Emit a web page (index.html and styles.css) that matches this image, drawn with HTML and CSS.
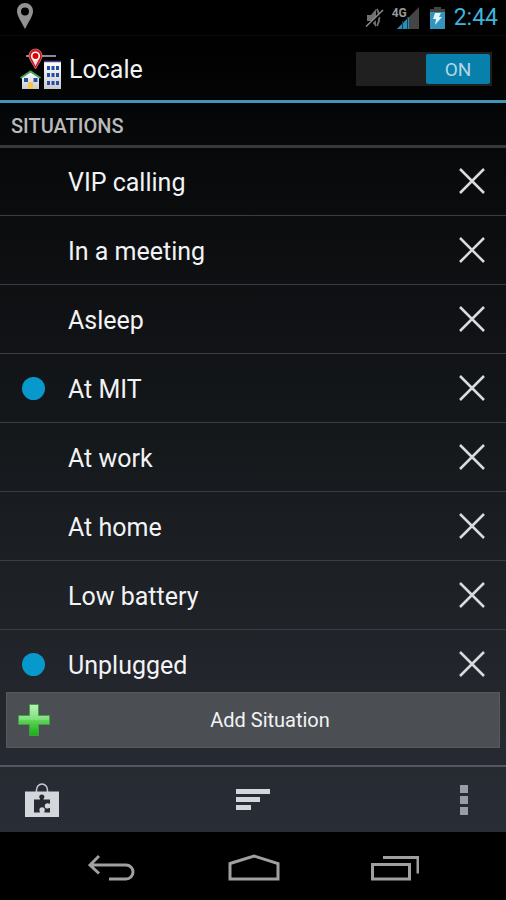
FILE: index.html
```html
<!DOCTYPE html>
<html lang="en">
<head>
<meta charset="utf-8">
<meta name="viewport" content="width=device-width, initial-scale=1">
<title>Locale</title>
<link rel="stylesheet" href="styles.css">
</head>
<body>
<div class="phone">
  <div class="status">
    <svg class="status-pin" width="18" height="28" viewBox="0 0 18 28"><path fill="#929292" fill-rule="evenodd" d="M9 1a8 8 0 0 0-8 8c0 5 4 10 8 18 4-8 8-13 8-18a8 8 0 0 0-8-8zm0 4.500a4 4 0 1 1 0 8 4 4 0 0 1 0-8z"/></svg>
    <div class="status-right">
      <svg width="20" height="22" viewBox="0 0 20 22"><path fill="#707070" d="M2 8h4l5-6v18l-5-6H2z"/><path d="M12 2q4.500 9 0 17" fill="none" stroke="#707070" stroke-width="2"/><path d="M1 21 19 4.500" stroke="#000" stroke-width="2"/><path d="M1 19.500 18 3" stroke="#8c8c8c" stroke-width="1.500"/></svg>
      <div class="signal">
        <span class="network">4G</span>
        <svg width="22" height="22" viewBox="0 0 22 22"><path fill="#454545" d="M22 0v22H0z"/><path fill="#278db5" d="M12 10v12H0z"/><path stroke="#123c4c" d="M5.500 14v8M10.500 10v12"/></svg>
      </div>
      <svg class="battery" width="15" height="22" viewBox="0 0 15 22"><path fill="#444" d="M4 0h7v2h4v4H0V2h4z"/><path fill="#3395bd" d="M0 5h15v17H0z"/><path fill="#e4f4fa" d="M5 6h6L9 10h3L5 18l1-6H3z"/></svg>
      <time class="clock">2:44</time>
    </div>
  </div>

  <div class="app">
    <header class="header">
      <svg class="logo" width="42" height="42" viewBox="0 0 42 42">
        <defs>
          <linearGradient id="wall" x2="0" y2="1"><stop stop-color="#fff"/><stop offset="1" stop-color="#c9c9cf"/></linearGradient>
        </defs>
        <path d="M6 8h30" stroke="#bbb" stroke-width="1.500"/>
        <path fill="#d5131b" stroke="#f0a0a0" stroke-width=".6" d="M15.500 1A6.500 6.500 0 0 0 9 7.500c0 4 3.500 8 6.500 13.500 3-5.500 6.500-9.500 6.500-13.500A6.500 6.500 0 0 0 15.500 1z"/>
        <path fill="#f4dede" d="M11.500 10h8l-4 8z"/>
        <circle cx="15.500" cy="8" r="3.800" fill="#d00" stroke="#fff" stroke-width="1.600"/>
        <path fill="url(#wall)" d="M24 14h17v27H24z"/><path stroke="#504098" stroke-width="1.500" d="M24 13.500h17"/>
        <path fill="#234ca5" d="M27 18h3v4h-3zm4.500 0h3v4h-3zm4.500 0h3v4h-3zM27 25h3v4h-3zm4.500 0h3v4h-3zm4.500 0h3v4h-3zM27 33h3v4h-3zm4.500 0h3v4h-3zm4.500 0h3v4h-3z"/>
        <path fill="url(#wall)" d="M2 29 10.500 24 19 29v12H2z"/>
        <path fill="none" stroke="#43a552" stroke-width="2" d="M.5 30 10.500 23.500 20.500 30"/>
        <path fill="#234ca5" d="M4 30h4v4H4zm9.500 0h4v4h-4z"/><path fill="#f2c64f" d="M8 34h5v7H8z"/>
      </svg>
      <h1 class="title">Locale</h1>
      <label class="switch"><input type="checkbox" checked aria-label="Locale enabled"><span class="thumb">ON</span></label>
    </header>

    <h2 class="section">SITUATIONS</h2>
    <ul class="list">
      <li class="row"><span class="dot"></span><span class="name">VIP calling</span><button class="remove" aria-label="Remove VIP calling"><svg width="26" height="26" viewBox="0 0 26 26"><path d="m1 1 24 24M25 1 1 25"/></svg></button></li>
      <li class="row"><span class="dot"></span><span class="name">In a meeting</span><button class="remove" aria-label="Remove In a meeting"><svg width="26" height="26" viewBox="0 0 26 26"><path d="m1 1 24 24M25 1 1 25"/></svg></button></li>
      <li class="row"><span class="dot"></span><span class="name">Asleep</span><button class="remove" aria-label="Remove Asleep"><svg width="26" height="26" viewBox="0 0 26 26"><path d="m1 1 24 24M25 1 1 25"/></svg></button></li>
      <li class="row"><span class="dot active"></span><span class="name">At MIT</span><button class="remove" aria-label="Remove At MIT"><svg width="26" height="26" viewBox="0 0 26 26"><path d="m1 1 24 24M25 1 1 25"/></svg></button></li>
      <li class="row"><span class="dot"></span><span class="name">At work</span><button class="remove" aria-label="Remove At work"><svg width="26" height="26" viewBox="0 0 26 26"><path d="m1 1 24 24M25 1 1 25"/></svg></button></li>
      <li class="row"><span class="dot"></span><span class="name">At home</span><button class="remove" aria-label="Remove At home"><svg width="26" height="26" viewBox="0 0 26 26"><path d="m1 1 24 24M25 1 1 25"/></svg></button></li>
      <li class="row"><span class="dot"></span><span class="name">Low battery</span><button class="remove" aria-label="Remove Low battery"><svg width="26" height="26" viewBox="0 0 26 26"><path d="m1 1 24 24M25 1 1 25"/></svg></button></li>
      <li class="row"><span class="dot active"></span><span class="name">Unplugged</span><button class="remove" aria-label="Remove Unplugged"><svg width="26" height="26" viewBox="0 0 26 26"><path d="m1 1 24 24M25 1 1 25"/></svg></button></li>
    </ul>

    <button class="add">
      <svg width="34" height="34" viewBox="0 0 34 34"><defs><linearGradient id="plus" x2="0" y2="1"><stop stop-color="#b5f5b5"/><stop offset=".48" stop-color="#7fdf7c"/><stop offset=".52" stop-color="#5bd455"/><stop offset="1" stop-color="#16b010"/></linearGradient></defs><path fill="url(#plus)" stroke="#4a9a4c" d="M12.500 1.500h9v11h11v9h-11v11h-9v-11h-11v-9h11z"/></svg>
      <span>Add Situation</span>
    </button>

    <div class="toolbar">
      <button class="tool" aria-label="Plug-ins">
        <svg width="34" height="34" viewBox="0 0 34 34"><path fill="none" stroke="#c8cbd0" stroke-width="1.500" d="M11.500 9V7a5.500 6 0 0 1 11 0v2"/><path fill="#d3d6da" d="M0 8.500h34V34H0z"/><path fill="#262a31" d="M9 16.500h6c.5-.8-.8-1.500-.8-2.500a2.600 2.600 0 0 1 5.200 0c0 1-1.300 1.700-.8 2.500H25v4c-1 .5-1.500-.3-2.500-.3a2.700 2.700 0 0 0 0 5.400c1 0 1.500-1 2.500-.5v4.400h-5.500c-.5-.8.3-1.500.3-2.500a2.700 2.700 0 0 0-5.400 0c0 1 .8 1.700.3 2.500H9z"/></svg>
      </button>
      <button class="tool" aria-label="Sort">
        <svg width="34" height="22" viewBox="0 0 34 22"><path fill="#d3d6da" d="M0 0h34v5H0zM0 8h24v5H0zM0 16h15v5H0z"/></svg>
      </button>
      <button class="tool more" aria-label="More options">
        <svg width="8" height="30" viewBox="0 0 8 30"><path fill="#9b9da2" d="M0 0h8v8H0zM0 11h8v8H0zM0 22h8v8H0z"/></svg>
      </button>
    </div>
  </div>

  <nav class="nav">
    <button aria-label="Back"><svg width="48" height="28" viewBox="0 0 48 28"><path d="M11 2 2 11l9 8.500M2 11h36a7 7 0 0 1 0 14H21"/></svg></button>
    <button aria-label="Home"><svg width="52" height="28" viewBox="0 0 52 28"><path d="M2 9.500 26 2l24 7.500V25H2z"/></svg></button>
    <button aria-label="Recent apps"><svg width="48" height="28" viewBox="0 0 48 28"><path d="M1.500 10.500h37V25h-37zM12 3.500h35v16"/></svg></button>
  </nav>
</div>
</body>
</html>
```

FILE: styles.css
```css
* { box-sizing: border-box; }

body {
  margin: 0;
  background: #000;
  color: #f2f3f5;
  font-family: Roboto, "Liberation Sans", sans-serif;
}

button {
  border: 0;
  padding: 0;
  background: none;
  color: inherit;
  font: inherit;
}

svg { display: block; flex: none; }

.phone {
  display: flex;
  flex-direction: column;
  height: 100vh;
}

.status {
  display: flex;
  justify-content: space-between;
  align-items: center;
  height: 36px;
  padding: 0 8px 0 16px;
  border-bottom: 1px solid #0c0c0c;
}

.status-pin { margin-bottom: 4px; }

.status-right { display: flex; align-items: center; }

.signal {
  display: flex;
  margin-left: 7px;
}

.network {
  position: relative;
  width: 14px;
  color: #999;
  font-size: 12px;
  line-height: 12px;
  font-weight: 700;
}

.signal svg { margin-left: -9px; }

.battery { margin: 0 9px 0 11px; }

.clock {
  color: #3fb2df;
  font-size: 23px;
  line-height: 36px;
}

.app {
  display: flex;
  flex: 1;
  flex-direction: column;
  min-height: 0;
  background: linear-gradient(#000, #08090b 15%, #15181b 50%, #22252b 80%, #292d36);
}

.header {
  display: flex;
  flex: none;
  align-items: center;
  height: 67px;
  padding: 2px 14px 0 20px;
  border-bottom: 3px solid #3f94b8;
}

.title {
  flex: 1;
  margin: 0 0 0 7px;
  padding-top: 2px;
  font-size: 25px;
  line-height: 32px;
  font-weight: 400;
}

.switch {
  display: flex;
  justify-content: flex-end;
  width: 136px;
  height: 34px;
  padding: 2px;
  background: #202020;
}

.switch input {
  width: 0;
  height: 0;
  margin: 0;
  appearance: none;
}

.thumb {
  width: 64px;
  border-radius: 2px;
  background: #0780ab;
  color: #b4d5e3;
  font-size: 19px;
  line-height: 32px;
  text-align: center;
}

.section {
  flex: none;
  margin: 0;
  padding: 4px 11px 0;
  border-bottom: 3px solid #37383a;
  color: #b9babb;
  font-size: 20px;
  line-height: 38px;
  font-weight: 500;
}

.list {
  flex: 1;
  min-height: 0;
  margin: -1px 0 0;
  padding: 0;
  overflow: hidden;
  list-style: none;
}

.row {
  display: flex;
  align-items: center;
  height: 69px;
  padding: 0 21px 0 22px;
  border-bottom: 1px solid #3b3d40;
}

.dot {
  width: 23px;
  height: 23px;
  border-radius: 50%;
}

.dot.active { background: #0799cc; }

.name {
  flex: 1;
  margin-left: 23px;
  padding-top: 3px;
  font-size: 25px;
  line-height: 32px;
}

.remove path {
  fill: none;
  stroke: #d9dbde;
  stroke-width: 2.5;
}

.add {
  display: flex;
  flex: none;
  align-items: center;
  height: 56px;
  margin: 0 6px 17px;
  padding: 0 10px;
  border: 1px solid #585b5e;
  background: #4b4e52;
  font-size: 20px;
}

.add span { flex: 1; }

.toolbar {
  display: grid;
  flex: none;
  grid-template-columns: 1fr auto 1fr;
  align-items: center;
  height: 67px;
  padding: 0 25px;
  border-top: 2px solid #54575c;
  background: linear-gradient(#262a31, #292d36);
}

.more {
  justify-self: end;
  margin-right: 13px;
}

.nav {
  display: flex;
  flex: none;
  align-items: center;
  justify-content: space-between;
  height: 68px;
  padding: 4px 87px 0 88px;
}

.nav path {
  fill: none;
  stroke: #a0a0a0;
  stroke-width: 3;
}
```
